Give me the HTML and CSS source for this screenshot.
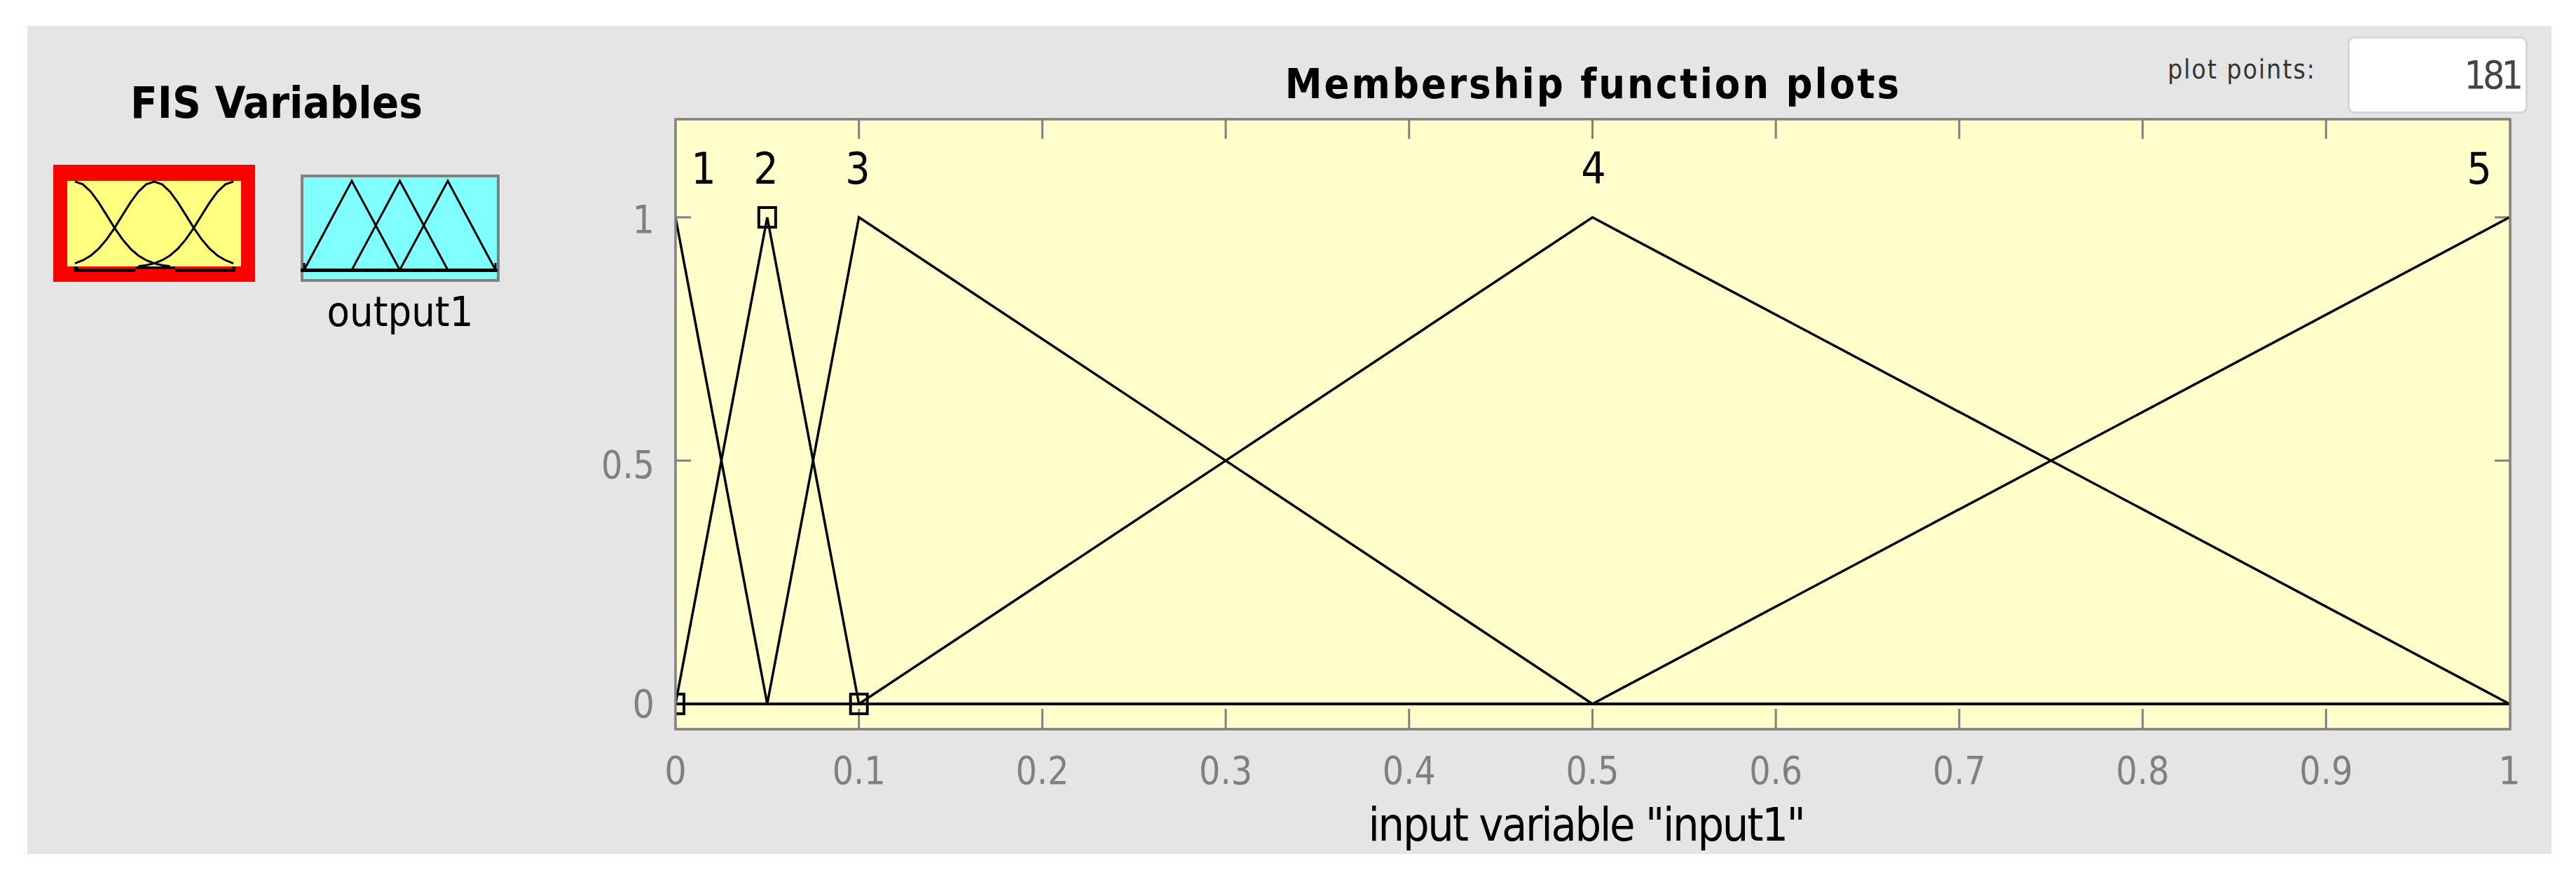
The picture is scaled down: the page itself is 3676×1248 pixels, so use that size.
FILE: index.html
```html
<!DOCTYPE html>
<html>

<head>
    <meta charset="utf-8">
    <title>Membership Function Editor</title>
    <link rel="stylesheet" href="styles.css">
</head>

<body>
    <div class="window">
        <aside class="vars">
            <div class="vars-inner">
                <h2 class="vars-title">FIS Variables</h2>
                <div class="vars-row">
                    <figure class="var">
                        <!-- selected input variable -->
                        <svg width="288" height="167" viewBox="0 0 288 167">
                            <rect x="0" y="0" width="288" height="167" fill="#ff0000" />
                            <rect x="20" y="23" width="248" height="122" fill="#ffff80" />
                            <g fill="none" stroke="#000" stroke-width="3">
                                <path d="M31,24 L42.3,27.8 L53.6,38.4 L64.9,53.9 L76.2,71.9 L87.5,90.1 L98.8,106.4 L110.1,119.6 L121.4,129.5 L132.7,136.2 L144,140.6 L155.3,143.2 L166.6,144.7" />
                                <path d="M31,140.6 L42.3,136.2 L53.6,129.5 L64.9,119.6 L76.2,106.4 L87.5,90.1 L98.8,71.9 L110.1,53.9 L121.4,38.4 L132.7,27.8 L144,24 L155.3,27.8 L166.6,38.4 L177.9,53.9 L189.2,71.9 L200.5,90.1 L211.8,106.4 L223.1,119.6 L234.4,129.5 L245.7,136.2 L257,140.6" />
                                <path d="M121.4,144.7 L132.7,143.2 L144,140.6 L155.3,136.2 L166.6,129.5 L177.9,119.6 L189.2,106.4 L200.5,90.1 L211.8,71.9 L223.1,53.9 L234.4,38.4 L245.7,27.8 L257,24" />
                            </g>
                            <g fill="#000">
                                <rect x="29" y="148" width="88" height="5" />
                                <rect x="117" y="145" width="57" height="3.5" />
                                <rect x="174" y="148" width="86" height="5" />
                                <rect x="29" y="145" width="6" height="8" />
                                <rect x="255" y="145" width="5" height="8" />
                            </g>
                        </svg>
                    </figure>
                    <figure class="var var-out">
                        <svg width="284" height="153" viewBox="0 0 284 153">
                            <rect x="2" y="2" width="280" height="149" fill="#80ffff" stroke="#808080" stroke-width="4" />
                            <g fill="none" stroke="#000" stroke-width="3">
                                <path d="M5,126 V136 L73,9 L141.5,136" />
                                <path d="M73,136 L141.5,9 L210,136" />
                                <path d="M141.5,136 L210,9 L278,136 V126" />
                            </g>
                            <rect x="0" y="134" width="281" height="5" fill="#000" />
                        </svg>
                        <figcaption class="var-name">output1</figcaption>
                    </figure>
                </div>
            </div>
        </aside>

        <main class="plot">
            <header class="plot-head">
                <h1 class="plot-title">Membership function plots</h1>
                <div class="points">
                    <span class="points-label">plot points:</span>
                    <div class="points-box">181</div>
                </div>
            </header>

            <svg class="chart" width="2801" height="965" viewBox="840 165 2801 965">
                <defs>
                    <clipPath id="plot-area">
                        <rect x="964" y="170" width="2618" height="870" />
                    </clipPath>
                </defs>

                <rect x="964" y="170" width="2618" height="870" fill="#ffffcc" />

                <!-- ticks -->
                <path class="ticks" d="M1225.7,1040 v-29 M1487.4,1040 v-29 M1749.1,1040 v-29 M2010.8,1040 v-29 M2272.5,1040 v-29
                    M2534.2,1040 v-29 M2795.9,1040 v-29 M3057.6,1040 v-29 M3319.3,1040 v-29
                    M1225.7,170 v28 M1487.4,170 v28 M1749.1,170 v28 M2010.8,170 v28 M2272.5,170 v28
                    M2534.2,170 v28 M2795.9,170 v28 M3057.6,170 v28 M3319.3,170 v28
                    M964,310 h22 M964,657 h22 M964,1004 h22 M3582,310 h-22 M3582,657 h-22 M3582,1004 h-22" />

                <!-- membership functions -->
                <g clip-path="url(#plot-area)">
                    <path class="baseline" d="M964,1004 H3582" />
                    <g class="mf">
                        <path d="M964,310 L1094.85,1004" />
                        <path d="M964,1004 L1094.85,310 L1225.7,1004" />
                        <path d="M1094.85,1004 L1225.7,310 L2272.5,1004" />
                        <path d="M1225.7,1004 L2272.5,310 L3581,1004" />
                        <path d="M2272.5,1004 L3581,310" />
                    </g>
                    <g class="marker">
                        <rect x="952" y="990" width="24" height="28" />
                        <rect x="1082.85" y="296" width="24" height="28" />
                        <rect x="1213.7" y="990" width="24" height="28" />
                    </g>
                </g>

                <rect class="frame" x="964" y="170" width="2618" height="870" />

                <!-- mf names -->
                <g class="mf-label">
                    <text x="1004" y="262">1</text>
                    <text x="1093" y="262">2</text>
                    <text x="1224" y="262">3</text>
                    <text x="2274" y="262">4</text>
                    <text x="3538" y="262">5</text>
                </g>

                <!-- axis numbers -->
                <g class="tick-label">
                    <text x="964" y="1118">0</text>
                    <text x="1225.7" y="1118" textLength="76" lengthAdjust="spacingAndGlyphs">0.1</text>
                    <text x="1487.4" y="1118" textLength="76" lengthAdjust="spacingAndGlyphs">0.2</text>
                    <text x="1749.1" y="1118" textLength="76" lengthAdjust="spacingAndGlyphs">0.3</text>
                    <text x="2010.8" y="1118" textLength="76" lengthAdjust="spacingAndGlyphs">0.4</text>
                    <text x="2272.5" y="1118" textLength="76" lengthAdjust="spacingAndGlyphs">0.5</text>
                    <text x="2534.2" y="1118" textLength="76" lengthAdjust="spacingAndGlyphs">0.6</text>
                    <text x="2795.9" y="1118" textLength="76" lengthAdjust="spacingAndGlyphs">0.7</text>
                    <text x="3057.6" y="1118" textLength="76" lengthAdjust="spacingAndGlyphs">0.8</text>
                    <text x="3319.3" y="1118" textLength="76" lengthAdjust="spacingAndGlyphs">0.9</text>
                    <text x="3581" y="1118">1</text>
                </g>
                <g class="tick-label y-label">
                    <text x="934" y="332">1</text>
                    <text x="934" y="682" textLength="76" lengthAdjust="spacingAndGlyphs">0.5</text>
                    <text x="934" y="1023">0</text>
                </g>
            </svg>

            <div class="x-title">input variable "input1"</div>
        </main>
    </div>
</body>

</html>
```

FILE: styles.css
```css
html {
    font-family: "DejaVu Sans Condensed", "DejaVu Sans", sans-serif;
    font-stretch: condensed;
}

body {
    margin: 0;
    background: #fff;
}

.window {
    display: flex;
    width: 3602px;
    height: 1181px;
    margin: 37px 0 0 39px;
    background-color: #e5e5e5;
}

/* left column: variables */

.vars {
    flex: 0 0 801px;
    box-sizing: border-box;
    padding-left: 37px;
}

.vars-inner {
    display: inline-flex;
    flex-direction: column;
    align-items: center;
}

.vars-title {
    margin: 78px 0 0;
    font-size: 63px;
    line-height: 63px;
    font-weight: bold;
}

.vars-row {
    display: flex;
    align-items: flex-start;
    gap: 65px;
    margin-top: 57px;
}

.var {
    margin: 0;
    display: flex;
    flex-direction: column;
    align-items: center;
}

.var svg {
    display: block;
}

.var-out {
    margin-top: 14px;
}

.var-name {
    margin-top: 13px;
    font-size: 59px;
    line-height: 59px;
}

/* right column: plot */

.plot {
    flex: 1;
    display: flex;
    flex-direction: column;
}

.plot-head {
    display: grid;
    grid-template-columns: 1fr auto 1fr;
    align-items: start;
    height: 128px;
    padding: 0 58px 0 124px;
}

.plot-title {
    grid-column: 2;
    margin: 53px 0 0;
    font-size: 59px;
    line-height: 59px;
    font-weight: bold;
    letter-spacing: 3px;
}

.points {
    grid-column: 3;
    justify-self: end;
    display: flex;
    align-items: center;
    gap: 45px;
    margin: 15px -24px 0 0;
}

.points-label {
    margin-bottom: 16px;
    font-size: 37px;
    letter-spacing: 2px;
    color: #333;
}

.points-box {
    width: 257px;
    height: 110px;
    box-sizing: border-box;
    padding-right: 8px;
    border: 3px solid #d6d6d6;
    border-radius: 10px;
    background: #fff;
    font-size: 55px;
    line-height: 104px;
    letter-spacing: -5px;
    color: #444;
    text-align: right;
}

.chart {
    display: block;
}

.chart .ticks {
    stroke: #808080;
    stroke-width: 3;
    fill: none;
}

.chart .frame {
    fill: none;
    stroke: #808080;
    stroke-width: 3.5;
}

.chart .baseline {
    stroke: #000;
    stroke-width: 4;
}

.chart .mf path {
    fill: none;
    stroke: #000;
    stroke-width: 3.5;
}

.chart .marker rect {
    fill: none;
    stroke: #000;
    stroke-width: 4;
}

.mf-label text {
    fill: #000;
    font-size: 62px;
    text-anchor: middle;
}

.tick-label text {
    fill: #808080;
    font-size: 55px;
    text-anchor: middle;
}

.y-label text {
    text-anchor: end;
}

.x-title {
    margin-top: 14px;
    padding: 0 78px 0 124px;
    text-align: center;
    font-size: 66px;
    line-height: 66px;
    letter-spacing: -2.3px;
}
```
